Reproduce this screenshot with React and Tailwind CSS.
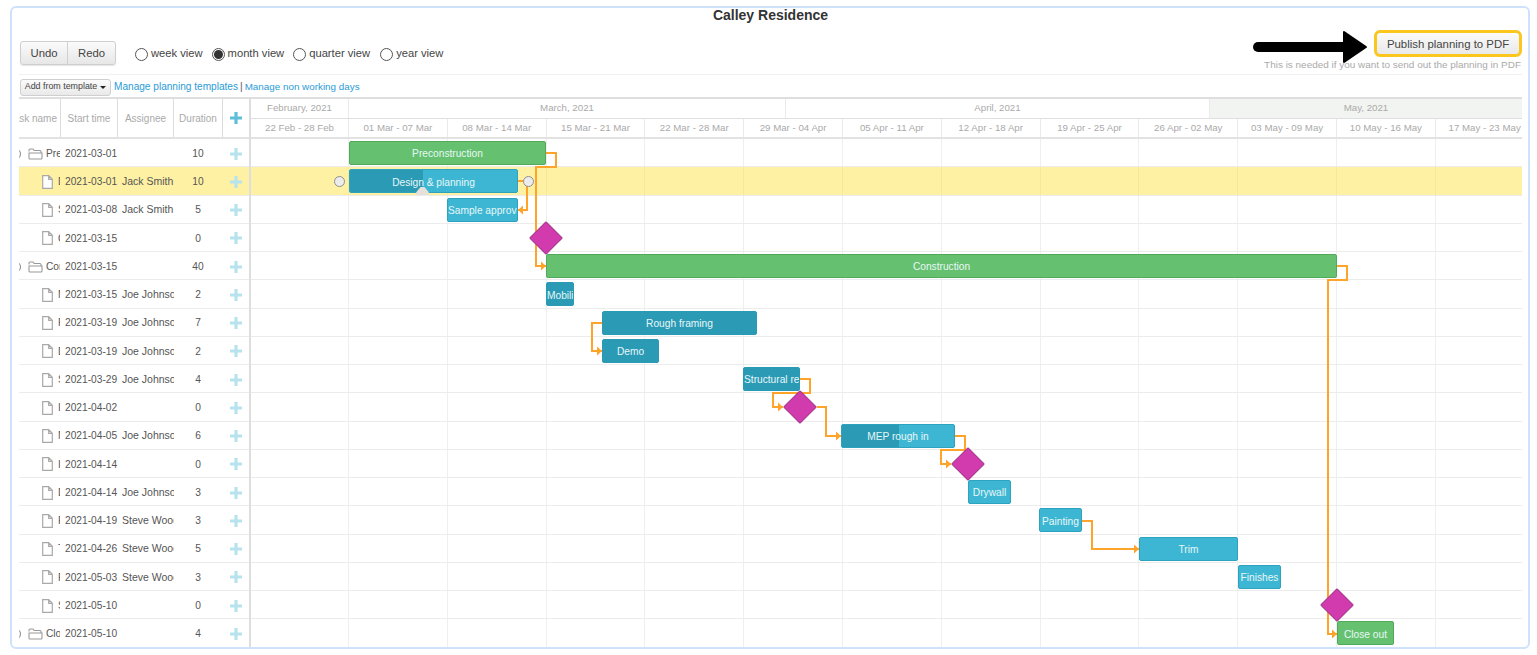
const ROW_H = 28.26;
const ORIGIN_X = 251;

const tasks = [
  { name: "Preconstruction", start: "2021-03-01", who: "", days: 10, folder: true },
  { name: "Design & planning", start: "2021-03-01", who: "Jack Smith", days: 10, selected: true },
  { name: "Sample approval", start: "2021-03-08", who: "Jack Smith", days: 5 },
  { name: "Client sign off", start: "2021-03-15", who: "", days: 0 },
  { name: "Construction", start: "2021-03-15", who: "", days: 40, folder: true },
  { name: "Mobilization", start: "2021-03-15", who: "Joe Johnson", days: 2 },
  { name: "Rough framing", start: "2021-03-19", who: "Joe Johnson", days: 7 },
  { name: "Demo", start: "2021-03-19", who: "Joe Johnson", days: 2 },
  { name: "Structural repairs", start: "2021-03-29", who: "Joe Johnson", days: 4 },
  { name: "Inspection", start: "2021-04-02", who: "", days: 0 },
  { name: "MEP rough in", start: "2021-04-05", who: "Joe Johnson", days: 6 },
  { name: "Inspection", start: "2021-04-14", who: "", days: 0 },
  { name: "Drywall", start: "2021-04-14", who: "Joe Johnson", days: 3 },
  { name: "Painting", start: "2021-04-19", who: "Steve Woods", days: 3 },
  { name: "Trim", start: "2021-04-26", who: "Steve Woods", days: 5 },
  { name: "Finishes", start: "2021-05-03", who: "Steve Woods", days: 3 },
  { name: "Substantial completion", start: "2021-05-10", who: "", days: 0 },
  { name: "Close out", start: "2021-05-10", who: "", days: 4, folder: true },
];

const weeks = [
  "22 Feb - 28 Feb", "01 Mar - 07 Mar", "08 Mar - 14 Mar", "15 Mar - 21 Mar",
  "22 Mar - 28 Mar", "29 Mar - 04 Apr", "05 Apr - 11 Apr", "12 Apr - 18 Apr",
  "19 Apr - 25 Apr", "26 Apr - 02 May", "03 May - 09 May", "10 May - 16 May",
  "17 May - 23 May",
];

const bars = [
  { row: 0, x1: 349, x2: 546, label: "Preconstruction", kind: "green" },
  { row: 1, x1: 349, x2: 518, label: "Design & planning", kind: "light", done: 73 },
  { row: 2, x1: 447, x2: 518, label: "Sample approval", kind: "light" },
  { row: 4, x1: 546, x2: 1337, label: "Construction", kind: "green" },
  { row: 5, x1: 546, x2: 574, label: "Mobilization", kind: "dark" },
  { row: 6, x1: 602, x2: 757, label: "Rough framing", kind: "dark" },
  { row: 7, x1: 602, x2: 659, label: "Demo", kind: "dark" },
  { row: 8, x1: 743, x2: 800, label: "Structural repairs", kind: "dark" },
  { row: 10, x1: 841, x2: 955, label: "MEP rough in", kind: "light", done: 57 },
  { row: 12, x1: 968, x2: 1011, label: "Drywall", kind: "light" },
  { row: 13, x1: 1039, x2: 1082, label: "Painting", kind: "light" },
  { row: 14, x1: 1139, x2: 1238, label: "Trim", kind: "light" },
  { row: 15, x1: 1238, x2: 1281, label: "Finishes", kind: "light" },
  { row: 17, x1: 1337, x2: 1394, label: "Close out", kind: "green" },
];

const milestones = [
  { row: 3, x: 546 },
  { row: 9, x: 800 },
  { row: 11, x: 968 },
  { row: 16, x: 1337 },
];

// page coordinates, the last point gets the arrow head
const links = [
  [[546, 153], [556, 153], [556, 167], [536, 167], [536, 266], [546, 266]],
  [[518, 181], [527, 181], [527, 210], [518, 210]],
  [[602, 323], [592, 323], [592, 351], [602, 351]],
  [[800, 379], [810, 379], [810, 393], [773, 393], [773, 407], [783, 407]],
  [[817, 407], [826, 407], [826, 436], [841, 436]],
  [[955, 436], [965, 436], [965, 450], [941, 450], [941, 464], [951, 464]],
  [[1082, 521], [1092, 521], [1092, 549], [1139, 549]],
  [[1337, 266], [1347, 266], [1347, 280], [1328, 280], [1328, 634], [1337, 634]],
];

const barStyles = {
  green: "bg-[#65c16f] border-[#52a95c]",
  light: "bg-[#3db6d3] border-[#2ea3bf]",
  dark: "bg-[#2a9ab5] border-[#2a9ab5]",
};

function PlusIcon({ className }) {
  return (
    <svg width="12" height="12" viewBox="0 0 12 12" className={className}>
      <path d="M4.4 0h3.2v4.4H12v3.2H7.6V12H4.4V7.6H0V4.4h4.4z" fill="currentColor" />
    </svg>
  );
}

function FileIcon() {
  return (
    <svg width="11" height="14" viewBox="0 0 11 14" className="shrink-0">
      <path d="M.7.7h6l3.6 3.6v9H.7z M6.7.7v3.6h3.6" fill="#fff" stroke="#a9a9a9" strokeWidth="1.2" />
    </svg>
  );
}

function FolderIcon() {
  return (
    <svg width="15" height="12" viewBox="0 0 15 12" className="shrink-0">
      <path
        d="M1 3.5V2q0-1 1-1h3l1.2 1.5H12q1 0 1 1V5 M1 5h13v5q0 1-1 1H2q-1 0-1-1z"
        fill="none"
        stroke="#9a9a9a"
        strokeWidth="1.1"
      />
    </svg>
  );
}

function Radio({ label, checked, className }) {
  return (
    <label className={`flex items-center ${className}`}>
      <span className="mt-[2px] mr-[3px] flex h-[13px] w-[13px] items-center justify-center rounded-full border border-[#555] bg-white">
        {checked && <span className="h-[9px] w-[9px] rounded-full bg-[#333]" />}
      </span>
      <span className="text-[11.2px] text-[#444]">{label}</span>
    </label>
  );
}

function TaskRow({ task }) {
  return (
    <div
      className={`flex h-[28.26px] items-center border-b border-[#ececec] pt-[2px] text-[10.2px] text-[#555] ${
        task.selected ? "bg-[#fff1a3]" : ""
      }`}
    >
      <div className="flex h-full w-[41px] shrink-0 items-center overflow-hidden whitespace-nowrap">
        {task.folder ? (
          <>
            <span className="ml-[-11px] h-[12px] w-[13px] shrink-0 rounded-full border border-[#888]" />
            <span className="ml-[7px] flex items-center">
              <FolderIcon />
            </span>
            <span className="ml-[3px]">{task.name}</span>
          </>
        ) : (
          <>
            <span className="ml-[23px] flex items-center">
              <FileIcon />
            </span>
            <span className="ml-[5px]">{task.name}</span>
          </>
        )}
      </div>
      <div className="w-[57px] shrink-0 pl-[5px] whitespace-nowrap">{task.start}</div>
      <div className="w-[57px] shrink-0 overflow-hidden pl-[5px] text-[10.5px] whitespace-nowrap">{task.who}</div>
      <div className="w-[48px] shrink-0 text-center">{task.days}</div>
      <div className="flex flex-1 justify-center">
        <PlusIcon className="text-[#b6e3ee]" />
      </div>
    </div>
  );
}

function ChartRow({ selected }) {
  return (
    <div className={`flex h-[28.26px] border-b border-[#ececec] ${selected ? "bg-[#fff1a3]" : ""}`}>
      {weeks.map((w, i) => (
        <div
          key={w}
          className={`h-full shrink-0 border-r ${selected ? "border-[#f6e79a]" : "border-[#efefef]"} ${
            i === 0 ? "w-[98px]" : "w-[98.8px]"
          }`}
        />
      ))}
    </div>
  );
}

function Bar({ bar }) {
  const done = bar.done;
  return (
    <div
      className={`absolute flex h-[24px] items-center justify-center overflow-hidden rounded-[2px] border text-[10.2px] whitespace-nowrap text-[#e8f7f7] ${barStyles[bar.kind]}`}
      style={{
        left: bar.x1 - ORIGIN_X,
        width: bar.x2 - bar.x1,
        top: bar.row * ROW_H + 2,
      }}
    >
      {done && <div className="absolute inset-y-0 left-0 bg-[#2a9ab5]" style={{ width: `${done}px` }} />}
      <span className={`relative top-[1px] ${bar.x2 - bar.x1 < 80 ? "w-full text-center" : ""}`}>{bar.label}</span>
    </div>
  );
}

function Milestone({ item }) {
  return (
    <div
      className="absolute h-[24px] w-[24px] rotate-45 rounded-[1px] border border-[#a5358c] bg-[#d23bae]"
      style={{
        left: item.x - ORIGIN_X - 12,
        top: item.row * ROW_H + 14.13 - 12,
      }}
    />
  );
}

function LinkLine({ points }) {
  const line = points.map((p) => `${p[0] - ORIGIN_X},${p[1] - 139}`).join(" ");
  const last = points[points.length - 1];
  const prev = points[points.length - 2];
  const dir = last[0] > prev[0] ? 1 : -1;
  const tipX = last[0] - ORIGIN_X;
  const tipY = last[1] - 139;
  return (
    <g>
      <polyline points={line} fill="none" stroke="#ffa42b" strokeWidth="2" />
      <polygon
        points={`${tipX},${tipY} ${tipX - 5 * dir},${tipY - 4.5} ${tipX - 5 * dir},${tipY + 4.5}`}
        fill="#ffa42b"
      />
    </g>
  );
}

function Handle({ x }) {
  return (
    <span
      className="absolute h-[11px] w-[11px] rounded-full border border-[#8f8f8f] bg-[#ececec]"
      style={{ left: x - ORIGIN_X - 5.5, top: 36.5 }}
    />
  );
}

function HeaderCell({ className, children }) {
  return (
    <div className={`flex h-full shrink-0 items-center justify-center overflow-hidden whitespace-nowrap border-r border-[#dcdcdc] ${className}`}>
      {children}
    </div>
  );
}

export default function App() {
  return (
    <div className="h-[655px] w-[1537px] bg-white pt-[6px] pr-[7px] pb-[6px] pl-[10px] font-['Liberation_Sans',Arial,sans-serif]">
      <div className="flex h-full flex-col overflow-hidden rounded-[6px] border-2 border-[#cfe2fb] pr-[6px] pl-[7px]">
        <div className="h-[22px] shrink-0 text-center text-[14px] leading-[15px] font-bold text-[#333]">
          Calley Residence
        </div>

        <div className="flex h-[45px] shrink-0 justify-between border-b border-[#f1f1f1]">
          <div className="ml-[1px] flex items-start pt-[11px]">
            <div className="flex h-[24px] rounded-[3px] border border-[#cfcfcf] bg-linear-to-b from-[#fbfbfb] to-[#e7e7e7] text-[11.3px] text-[#444] shadow-[0_1px_1px_#e5e5e5]">
              <span className="flex w-[47px] items-center justify-center border-r border-[#cfcfcf]">Undo</span>
              <span className="flex w-[47px] items-center justify-center">Redo</span>
            </div>
            <div className="ml-[19px] flex items-center pt-[4px]">
              <Radio label="week view" />
              <Radio label="month view" checked className="ml-[9px]" />
              <Radio label="quarter view" className="ml-[9px]" />
              <Radio label="year view" className="ml-[10px]" />
            </div>
          </div>

          <div className="relative flex w-[270px] flex-col items-end">
            <svg
              width="116"
              height="34"
              viewBox="0 0 116 34"
              className="absolute top-0 left-[1px] z-10"
            >
              <line x1="5" y1="17" x2="95" y2="17" stroke="#000" strokeWidth="10" strokeLinecap="round" />
              <path d="M91 2 113 17 91 32z" fill="#000" stroke="#000" strokeWidth="2" strokeLinejoin="round" />
            </svg>
            <div className="flex h-[27px] w-[148px] items-center justify-center rounded-[6px] border-[3px] border-[#fbc61d] bg-linear-to-b from-[#fbfbfb] to-[#e9e9e9] pt-[2px] text-[11.4px] whitespace-nowrap text-[#444]">
              Publish planning to PDF
            </div>
            <div className="mt-[2px] pr-[1px] text-[9.95px] leading-[12px] whitespace-nowrap text-[#aaa]">
              This is needed if you want to send out the planning in PDF
            </div>
          </div>
        </div>

        <div className="flex h-[22px] shrink-0 items-center pt-[2px] text-[10.1px] text-[#2a9bd6]">
          <div className="mr-[3px] ml-[1px] flex h-[17px] w-[91px] items-center justify-center rounded-[3px] border border-[#cfcfcf] bg-linear-to-b from-[#fbfbfb] to-[#e9e9e9] text-[8.9px] whitespace-nowrap text-[#444]">
            Add from template
            <span className="ml-[3px] h-0 w-0 border-x-[3px] border-t-[3px] border-x-transparent border-t-[#222]" />
          </div>
          <span>Manage planning templates</span>
          <span className="mx-[2px] text-[#555]">|</span>
          <span className="text-[9.85px]">Manage non working days</span>
        </div>

        <div className="flex min-h-0 flex-1 overflow-hidden border-t-2 border-[#dedede]">
          <div className="w-[232px] shrink-0 border-r-2 border-[#dedede]">
            <div className="flex h-[40px] items-center border-b-2 border-[#e2e2e2] text-[10px] text-[#aaa]">
              <HeaderCell className="w-[42px] justify-end pr-[3px]">
                <span className="shrink-0">Task name</span>
              </HeaderCell>
              <HeaderCell className="w-[57px]">Start time</HeaderCell>
              <HeaderCell className="w-[56px]">Assignee</HeaderCell>
              <HeaderCell className="w-[49px]">Duration</HeaderCell>
              <div className="flex flex-1 justify-center">
                <PlusIcon className="text-[#5fbfd8]" />
              </div>
            </div>
            {tasks.map((task, i) => (
              <TaskRow key={i} task={task} />
            ))}
          </div>

          <div className="min-w-0 flex-1 overflow-hidden">
            <div className="h-[40px] border-b-2 border-[#e2e2e2] text-[9.7px] text-[#aaa]">
              <div className="flex h-[20px] border-b border-[#dfdfdf]">
                <div className="flex w-[98px] shrink-0 items-center justify-center border-r border-[#eaeaea]">February, 2021</div>
                <div className="flex w-[437px] shrink-0 items-center justify-center border-r border-[#eaeaea]">March, 2021</div>
                <div className="flex w-[424px] shrink-0 items-center justify-center border-r border-[#eaeaea]">April, 2021</div>
                <div className="flex flex-1 items-center justify-center bg-[#f2f4f1]">May, 2021</div>
              </div>
              <div className="flex h-[18px]">
                {weeks.map((w, i) => (
                  <div
                    key={w}
                    className={`flex shrink-0 items-center justify-center border-r border-[#eaeaea] whitespace-nowrap ${
                      i === 0 ? "w-[98px]" : "w-[98.8px]"
                    }`}
                  >
                    {w}
                  </div>
                ))}
              </div>
            </div>

            <div className="relative">
              {tasks.map((task, i) => (
                <ChartRow key={i} selected={task.selected} />
              ))}
              <svg className="absolute top-0 left-0 h-[510px] w-[1272px]">
                {links.map((points, i) => (
                  <LinkLine key={i} points={points} />
                ))}
              </svg>
              {bars.map((bar) => (
                <Bar key={bar.label} bar={bar} />
              ))}
              {milestones.map((item) => (
                <Milestone key={item.row} item={item} />
              ))}
              <Handle x={339} />
              <Handle x={528} />
              <span className="absolute top-[48px] left-[165px] h-[8px] w-[13px] bg-[#e6e2da] [clip-path:polygon(35%_0,65%_0,100%_70%,100%_100%,0_100%,0_70%)]" />
            </div>
          </div>
        </div>
      </div>
    </div>
  );
}
